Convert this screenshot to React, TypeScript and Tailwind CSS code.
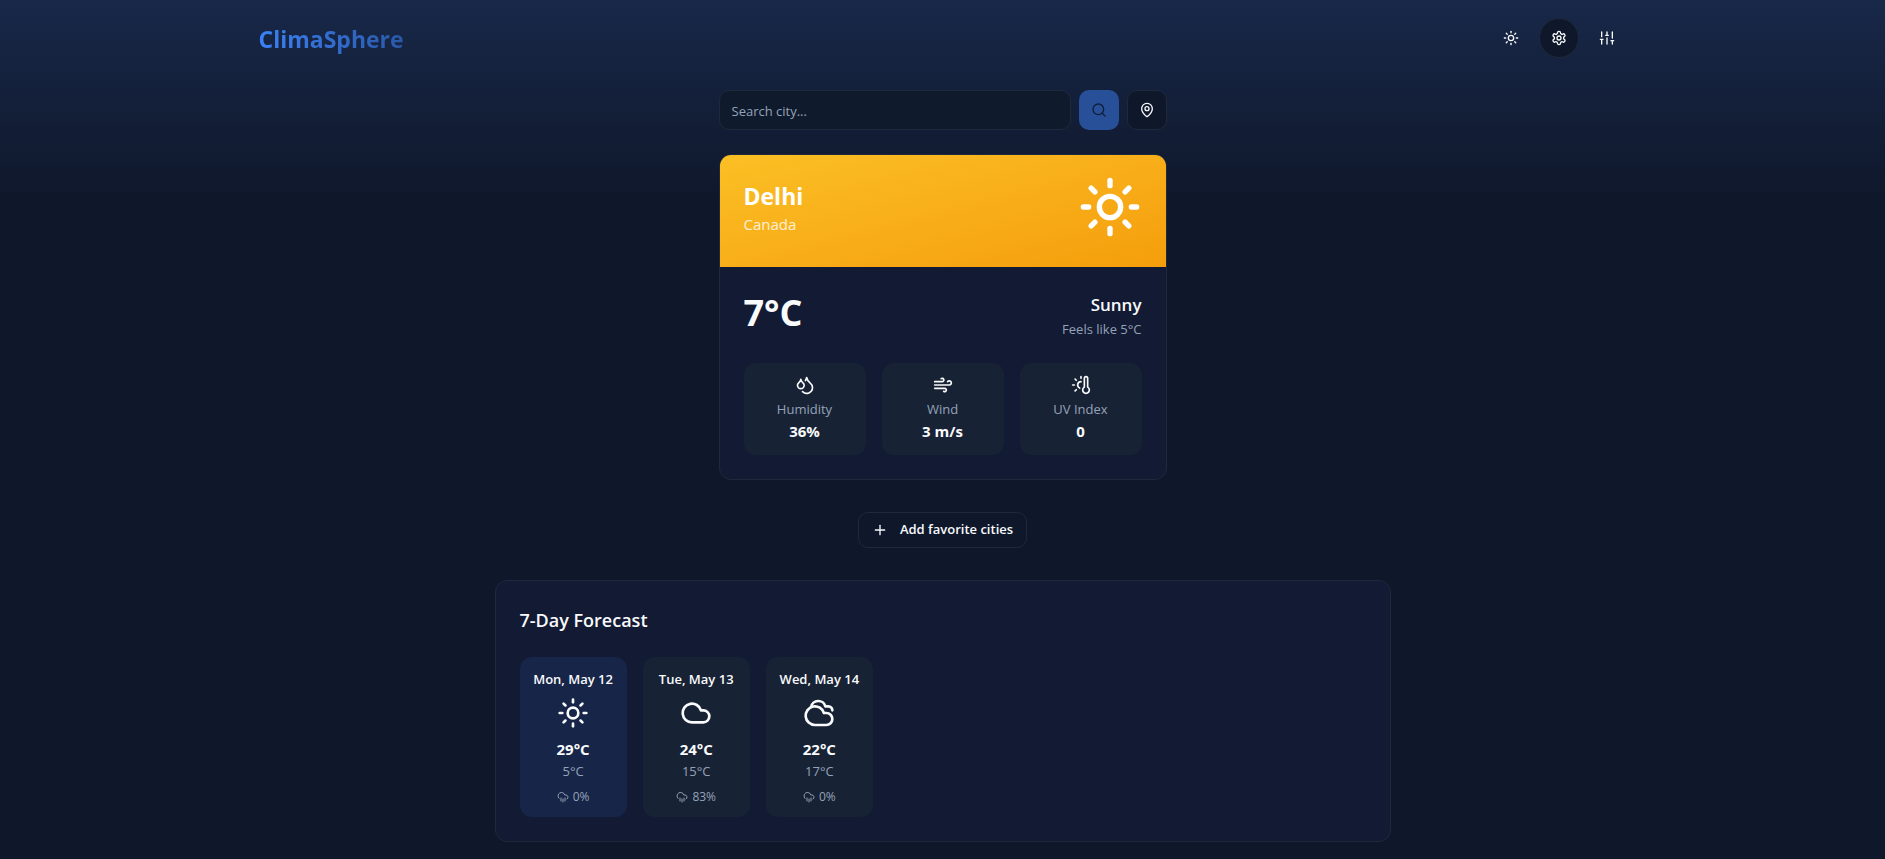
import type { SVGProps } from "react";
import {
  Cloud,
  CloudRain,
  Cloudy,
  Droplets,
  MapPin,
  Plus,
  Search,
  Sun,
  ThermometerSun,
  Wind,
  type LucideIcon,
} from "lucide-react";

type Stat = { label: string; value: string; icon: LucideIcon };
type Day = { date: string; icon: LucideIcon; high: string; low: string; rain: string; today?: boolean };

const stats: Stat[] = [
  { label: "Humidity", value: "36%", icon: Droplets },
  { label: "Wind", value: "3 m/s", icon: Wind },
  { label: "UV Index", value: "0", icon: ThermometerSun },
];

const days: Day[] = [
  { date: "Mon, May 12", icon: Sun, high: "29°C", low: "5°C", rain: "0%", today: true },
  { date: "Tue, May 13", icon: Cloud, high: "24°C", low: "15°C", rain: "83%" },
  { date: "Wed, May 14", icon: Cloudy, high: "22°C", low: "17°C", rain: "0%" },
];

const outline: SVGProps<SVGSVGElement> = {
  viewBox: "0 0 24 24",
  fill: "none",
  stroke: "currentColor",
  strokeWidth: 2,
  strokeLinecap: "round",
  strokeLinejoin: "round",
  "aria-hidden": true,
};

function GearIcon() {
  return (
    <svg {...outline} className="size-4">
      <path d="M12.22 2h-.44a2 2 0 0 0-2 2v.18a2 2 0 0 1-1 1.73l-.43.25a2 2 0 0 1-2 0l-.15-.08a2 2 0 0 0-2.73.73l-.22.38a2 2 0 0 0 .73 2.73l.15.1a2 2 0 0 1 1 1.72v.51a2 2 0 0 1-1 1.74l-.15.09a2 2 0 0 0-.73 2.73l.22.38a2 2 0 0 0 2.73.73l.15-.08a2 2 0 0 1 2 0l.43.25a2 2 0 0 1 1 1.73V20a2 2 0 0 0 2 2h.44a2 2 0 0 0 2-2v-.18a2 2 0 0 1 1-1.73l.43-.25a2 2 0 0 1 2 0l.15.08a2 2 0 0 0 2.73-.73l.22-.39a2 2 0 0 0-.73-2.73l-.15-.08a2 2 0 0 1-1-1.74v-.5a2 2 0 0 1 1-1.74l.15-.09a2 2 0 0 0 .73-2.73l-.22-.38a2 2 0 0 0-2.73-.73l-.15.08a2 2 0 0 1-2 0l-.43-.25a2 2 0 0 1-1-1.73V4a2 2 0 0 0-2-2z" />
      <circle cx="12" cy="12" r="3" />
    </svg>
  );
}

function SlidersIcon() {
  return (
    <svg {...outline} className="size-4">
      <path d="M4 21v-7M4 10V3M12 21v-9M12 8V3M20 21v-5M20 12V3M2 14h4M10 8h4M18 16h4" />
    </svg>
  );
}

function Header() {
  return (
    <header className="mx-auto flex w-full max-w-[1400px] items-center justify-between px-4 pt-[18px]">
      <h1 className="bg-gradient-to-r from-[#3b82f6] to-[#2a58a8] bg-clip-text pt-0.5 text-[23px] leading-8 font-bold text-transparent">
        ClimaSphere
      </h1>
      <nav className="flex gap-2">
        <button type="button" aria-label="Toggle theme" className="flex size-10 items-center justify-center rounded-full">
          <Sun className="size-4" />
        </button>
        <button
          type="button"
          aria-label="Settings"
          className="flex size-10 items-center justify-center rounded-full border border-[#1e293b] bg-[#0f172a]"
        >
          <GearIcon />
        </button>
        <button type="button" aria-label="Preferences" className="flex size-10 items-center justify-center rounded-full">
          <SlidersIcon />
        </button>
      </nav>
    </header>
  );
}

function SearchBar() {
  return (
    <form className="flex w-full max-w-md gap-2" onSubmit={(e) => e.preventDefault()}>
      <input
        type="text"
        aria-label="Search city"
        placeholder="Search city..."
        className="h-10 min-w-0 flex-1 rounded-[10px] border border-[#1e293b] bg-[#101a2d] px-3 pt-0.5 text-[13px] placeholder:text-[#94a3b8]"
      />
      <button
        type="submit"
        aria-label="Search"
        className="flex size-10 items-center justify-center rounded-[10px] bg-[#275098] text-[#111d38]"
      >
        <Search className="size-4" />
      </button>
      <button
        type="button"
        aria-label="Use my location"
        className="flex size-10 items-center justify-center rounded-[10px] border border-[#1e293b] bg-[#0f172a]"
      >
        <MapPin className="size-4" />
      </button>
    </form>
  );
}

function CurrentWeather() {
  return (
    <section className="mt-6 w-full max-w-md overflow-hidden rounded-xl border border-[#1e293b] bg-[#131a33]">
      <div className="flex items-center justify-between bg-gradient-to-br from-[#fbbf24] to-[#f59e0b] px-6 pt-5 pb-7 text-white">
        <div className="pt-0.5">
          <h2 className="text-[23px] leading-8 font-bold">Delhi</h2>
          <p className="text-[15px] leading-6 text-white/80">Canada</p>
        </div>
        <Sun className="size-16" />
      </div>
      <div className="p-6">
        <div className="flex items-start justify-between">
          <p className="text-[36px] leading-[44px] font-bold">7°C</p>
          <div className="text-right">
            <p className="text-[17px] leading-7 font-semibold">Sunny</p>
            <p className="text-[13px] leading-5 text-[#94a3b8]">Feels like 5°C</p>
          </div>
        </div>
        <div className="mt-6 grid grid-cols-3 gap-4">
          {stats.map(({ label, value, icon: Icon }) => (
            <div key={label} className="flex flex-col items-center rounded-xl bg-[#182235] p-3">
              <Icon className="mb-1 size-5" />
              <span className="text-[13px] leading-5 text-[#94a3b8]">{label}</span>
              <span className="text-[15px] leading-6 font-bold">{value}</span>
            </div>
          ))}
        </div>
      </div>
    </section>
  );
}

function Forecast() {
  return (
    <section className="mt-8 w-full max-w-4xl rounded-xl border border-[#1e293b] bg-[#131a33] p-6">
      <h2 className="pt-0.5 text-[18px] leading-[26px] font-semibold">7-Day Forecast</h2>
      <div className="mt-6 grid grid-cols-7 gap-4">
        {days.map(({ date, icon: Icon, high, low, rain, today }) => (
          <div
            key={date}
            className={`flex flex-col items-center rounded-xl p-3 ${today ? "bg-[#172548]" : "bg-[#182235]"}`}
          >
            <span className="text-[13px] leading-5 font-semibold whitespace-nowrap">{date}</span>
            <Icon className="my-2 size-8" />
            <span className="text-[15px] leading-6 font-bold">{high}</span>
            <span className="text-[13px] leading-5 text-[#94a3b8]">{low}</span>
            <span className="mt-2 flex items-center gap-1 text-[12px] leading-4 text-[#94a3b8]">
              <CloudRain className="size-3" />
              {rain}
            </span>
          </div>
        ))}
      </div>
    </section>
  );
}

export default function App() {
  return (
    <div className="min-h-screen bg-[#0f172a] bg-[linear-gradient(to_bottom,#182849,#0f172a)] bg-[length:100%_204px] bg-no-repeat font-['Open_Sans','Noto_Sans',sans-serif] text-[#f8fafc]">
      <Header />
      <main className="flex flex-col items-center px-4 pt-8 pb-4">
        <SearchBar />
        <CurrentWeather />
        <button
          type="button"
          className="mt-8 flex h-9 items-center gap-3 rounded-[10px] border border-[#1e293b] px-[13px] text-[13px] font-semibold"
        >
          <Plus className="size-4" />
          Add favorite cities
        </button>
        <Forecast />
      </main>
    </div>
  );
}
